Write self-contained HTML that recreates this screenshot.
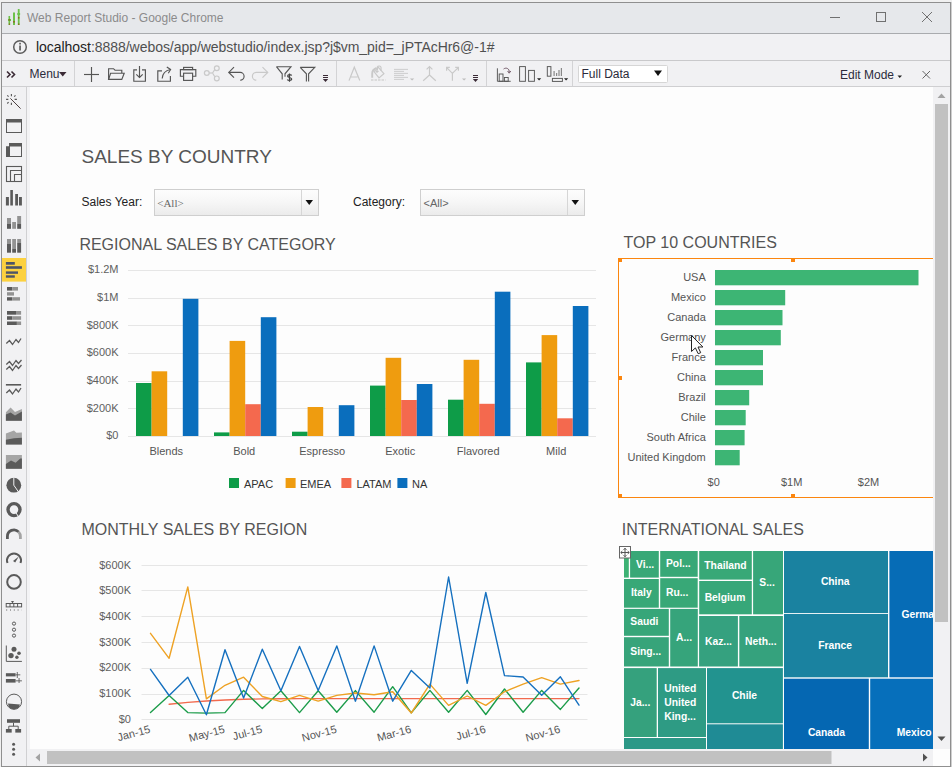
<!DOCTYPE html>
<html><head><meta charset="utf-8">
<style>
*{margin:0;padding:0;box-sizing:border-box}
html,body{width:952px;height:767px;overflow:hidden;background:#f0f0f0;font-family:"Liberation Sans",sans-serif}
.a{position:absolute}
#win{position:absolute;left:0;top:0;width:952px;height:767px;overflow:hidden}
#frame{position:absolute;left:1px;top:2px;width:950px;height:765px;border:1px solid #8f8f8f}
#title{position:absolute;left:2px;top:3px;width:948px;height:31px;background:#e6e8eb;border-bottom:1px solid #a9abae}
#addr{position:absolute;left:2px;top:34px;width:948px;height:27px;background:#f1f1f3;border-bottom:1px solid #c9c9cb}
#tb{position:absolute;left:2px;top:61px;width:948px;height:26px;background:#f1f1f3;border-bottom:1px solid #cfcfd1}
#side{position:absolute;left:2px;top:87px;width:25px;height:680px;background:#f1f1f3;border-right:1px solid #d0d0d2}
#content{position:absolute;left:27px;top:87px;width:906px;height:662px;background:#fdfdfd}
#vsb{position:absolute;left:933px;top:87px;width:17px;height:662px;background:#f1f1f3}
#hsb{position:absolute;left:27px;top:749px;width:906px;height:17px;background:#f1f1f3}
#corner{position:absolute;left:933px;top:749px;width:17px;height:17px;background:#fdfdfd}
svg{position:absolute;left:0;top:0;overflow:visible}
</style></head><body>
<div id="win">
<div id="title"></div>
<div id="addr"></div>
<div id="tb"></div>
<div id="side"></div>
<div id="content"></div>
<!--CONTENT--><svg width="952" height="767" viewBox="0 0 952 767" style="position:absolute;left:0;top:0">
<defs><linearGradient id="dd" x1="0" y1="0" x2="0" y2="1"><stop offset="0" stop-color="#fdfdfd"/><stop offset="0.5" stop-color="#f6f6f6"/><stop offset="1" stop-color="#ebebeb"/></linearGradient><clipPath id="cc"><rect x="27" y="87" width="906" height="662"/></clipPath></defs>
<g clip-path="url(#cc)">
<text x="81.5" y="163" font-size="19" fill="#555">SALES BY COUNTRY</text>
<text x="81.5" y="206" font-size="12" fill="#222">Sales Year:</text>
<rect x="154.5" y="189.5" width="164" height="26" fill="url(#dd)" stroke="#cfcfcf"/>
<line x1="301.5" y1="190" x2="301.5" y2="215" stroke="#d6d6d6"/>
<polygon points="305.5,200 313,200 309.25,205" fill="#111"/>
<text x="157.2" y="207.3" font-family="Liberation Serif" font-size="11" fill="#666">&lt;All&gt;</text>
<text x="353" y="206" font-size="12" fill="#222">Category:</text>
<rect x="420.5" y="189.5" width="164" height="26" fill="url(#dd)" stroke="#cfcfcf"/>
<line x1="567.5" y1="190" x2="567.5" y2="215" stroke="#d6d6d6"/>
<polygon points="571.5,200 579,200 575.25,205" fill="#111"/>
<text x="423.5" y="207.3" font-size="11" fill="#666">&lt;All&gt;</text>
<text x="79.4" y="250" font-size="16" fill="#555">REGIONAL SALES BY CATEGORY</text>
<line x1="128" y1="436.5" x2="596" y2="436.5" stroke="#e6e6e6"/>
<text x="118.5" y="439.3" font-size="11" fill="#606060" text-anchor="end">$0</text>
<line x1="128" y1="408.5" x2="596" y2="408.5" stroke="#e6e6e6"/>
<text x="118.5" y="411.6" font-size="11" fill="#606060" text-anchor="end">$200K</text>
<line x1="128" y1="381.5" x2="596" y2="381.5" stroke="#e6e6e6"/>
<text x="118.5" y="384.0" font-size="11" fill="#606060" text-anchor="end">$400K</text>
<line x1="128" y1="353.5" x2="596" y2="353.5" stroke="#e6e6e6"/>
<text x="118.5" y="356.3" font-size="11" fill="#606060" text-anchor="end">$600K</text>
<line x1="128" y1="325.5" x2="596" y2="325.5" stroke="#e6e6e6"/>
<text x="118.5" y="328.6" font-size="11" fill="#606060" text-anchor="end">$800K</text>
<line x1="128" y1="298.5" x2="596" y2="298.5" stroke="#e6e6e6"/>
<text x="118.5" y="301.0" font-size="11" fill="#606060" text-anchor="end">$1M</text>
<line x1="128" y1="270.5" x2="596" y2="270.5" stroke="#e6e6e6"/>
<text x="118.5" y="273.3" font-size="11" fill="#606060" text-anchor="end">$1.2M</text>
<rect x="136.0" y="383.0" width="15.6" height="53.0" fill="#0e9c48"/>
<rect x="151.6" y="371.3" width="15.6" height="64.7" fill="#ef9c0f"/>
<rect x="182.8" y="298.8" width="15.6" height="137.2" fill="#0a6ebd"/>
<text x="166.2" y="454.7" font-size="11" fill="#555" text-anchor="middle">Blends</text>
<rect x="214.0" y="432.4" width="15.6" height="3.6" fill="#0e9c48"/>
<rect x="229.6" y="340.9" width="15.6" height="95.1" fill="#ef9c0f"/>
<rect x="245.2" y="404.2" width="15.6" height="31.8" fill="#f4694e"/>
<rect x="260.8" y="317.2" width="15.6" height="118.8" fill="#0a6ebd"/>
<text x="244.2" y="454.7" font-size="11" fill="#555" text-anchor="middle">Bold</text>
<rect x="292.0" y="431.7" width="15.6" height="4.3" fill="#0e9c48"/>
<rect x="307.6" y="407.0" width="15.6" height="29.0" fill="#ef9c0f"/>
<rect x="338.8" y="405.2" width="15.6" height="30.8" fill="#0a6ebd"/>
<text x="322.2" y="454.7" font-size="11" fill="#555" text-anchor="middle">Espresso</text>
<rect x="370.0" y="385.6" width="15.6" height="50.4" fill="#0e9c48"/>
<rect x="385.6" y="357.8" width="15.6" height="78.2" fill="#ef9c0f"/>
<rect x="401.2" y="400.0" width="15.6" height="36.0" fill="#f4694e"/>
<rect x="416.8" y="384.0" width="15.6" height="52.0" fill="#0a6ebd"/>
<text x="400.2" y="454.7" font-size="11" fill="#555" text-anchor="middle">Exotic</text>
<rect x="448.0" y="399.7" width="15.6" height="36.3" fill="#0e9c48"/>
<rect x="463.6" y="359.8" width="15.6" height="76.2" fill="#ef9c0f"/>
<rect x="479.2" y="403.8" width="15.6" height="32.2" fill="#f4694e"/>
<rect x="494.8" y="291.7" width="15.6" height="144.3" fill="#0a6ebd"/>
<text x="478.2" y="454.7" font-size="11" fill="#555" text-anchor="middle">Flavored</text>
<rect x="526.0" y="362.4" width="15.6" height="73.6" fill="#0e9c48"/>
<rect x="541.6" y="335.1" width="15.6" height="100.9" fill="#ef9c0f"/>
<rect x="557.2" y="418.3" width="15.6" height="17.7" fill="#f4694e"/>
<rect x="572.8" y="306.0" width="15.6" height="130.0" fill="#0a6ebd"/>
<text x="556.2" y="454.7" font-size="11" fill="#555" text-anchor="middle">Mild</text>
<rect x="229" y="478" width="10" height="10" fill="#0e9c48"/>
<text x="244" y="488" font-size="11" fill="#333">APAC</text>
<rect x="285.6" y="478" width="10" height="10" fill="#ef9c0f"/>
<text x="300" y="488" font-size="11" fill="#333">EMEA</text>
<rect x="341.4" y="478" width="10" height="10" fill="#f4694e"/>
<text x="356.4" y="488" font-size="11" fill="#333">LATAM</text>
<rect x="397.4" y="478" width="10" height="10" fill="#0a6ebd"/>
<text x="412" y="488" font-size="11" fill="#333">NA</text>
<text x="623.6" y="248" font-size="16" fill="#555">TOP 10 COUNTRIES</text>
<rect x="715" y="270" width="203.5" height="15.3" fill="#3db574"/>
<text x="705.8" y="280.9" font-size="11" fill="#555" text-anchor="end">USA</text>
<rect x="715" y="290" width="70.2" height="15.3" fill="#3db574"/>
<text x="705.8" y="300.9" font-size="11" fill="#555" text-anchor="end">Mexico</text>
<rect x="715" y="310" width="67.5" height="15.3" fill="#3db574"/>
<text x="705.8" y="320.9" font-size="11" fill="#555" text-anchor="end">Canada</text>
<rect x="715" y="330" width="65.8" height="15.3" fill="#3db574"/>
<text x="705.8" y="340.9" font-size="11" fill="#555" text-anchor="end">Germany</text>
<rect x="715" y="350" width="48.0" height="15.3" fill="#3db574"/>
<text x="705.8" y="360.9" font-size="11" fill="#555" text-anchor="end">France</text>
<rect x="715" y="370" width="48.0" height="15.3" fill="#3db574"/>
<text x="705.8" y="380.9" font-size="11" fill="#555" text-anchor="end">China</text>
<rect x="715" y="390" width="34.2" height="15.3" fill="#3db574"/>
<text x="705.8" y="400.9" font-size="11" fill="#555" text-anchor="end">Brazil</text>
<rect x="715" y="410" width="30.7" height="15.3" fill="#3db574"/>
<text x="705.8" y="420.9" font-size="11" fill="#555" text-anchor="end">Chile</text>
<rect x="715" y="430" width="29.6" height="15.3" fill="#3db574"/>
<text x="705.8" y="440.9" font-size="11" fill="#555" text-anchor="end">South Africa</text>
<rect x="715" y="450" width="24.7" height="15.3" fill="#3db574"/>
<text x="705.8" y="460.9" font-size="11" fill="#555" text-anchor="end">United Kingdom</text>
<text x="713.7" y="486.2" font-size="11" fill="#555" text-anchor="middle">$0</text>
<text x="791.7" y="486.2" font-size="11" fill="#555" text-anchor="middle">$1M</text>
<text x="868.5" y="486.2" font-size="11" fill="#555" text-anchor="middle">$2M</text>
<rect x="618.5" y="258.5" width="340" height="239" fill="none" stroke="#fb860f"/>
<rect x="618" y="258" width="4" height="4" fill="#fb860f"/>
<rect x="791" y="258" width="4" height="4" fill="#fb860f"/>
<rect x="618" y="376" width="4" height="4" fill="#fb860f"/>
<rect x="618" y="494" width="4" height="4" fill="#fb860f"/>
<rect x="791" y="494" width="4" height="4" fill="#fb860f"/>
<text x="81.5" y="535" font-size="16" fill="#555">MONTHLY SALES BY REGION</text>
<line x1="141.5" y1="719.5" x2="587.5" y2="719.5" stroke="#e6e6e6"/>
<text x="131" y="722.9" font-size="11" fill="#606060" text-anchor="end">$0</text>
<line x1="141.5" y1="694.5" x2="587.5" y2="694.5" stroke="#e6e6e6"/>
<text x="131" y="697.1" font-size="11" fill="#606060" text-anchor="end">$100K</text>
<line x1="141.5" y1="668.5" x2="587.5" y2="668.5" stroke="#e6e6e6"/>
<text x="131" y="671.4" font-size="11" fill="#606060" text-anchor="end">$200K</text>
<line x1="141.5" y1="642.5" x2="587.5" y2="642.5" stroke="#e6e6e6"/>
<text x="131" y="645.7" font-size="11" fill="#606060" text-anchor="end">$300K</text>
<line x1="141.5" y1="616.5" x2="587.5" y2="616.5" stroke="#e6e6e6"/>
<text x="131" y="619.9" font-size="11" fill="#606060" text-anchor="end">$400K</text>
<line x1="141.5" y1="590.5" x2="587.5" y2="590.5" stroke="#e6e6e6"/>
<text x="131" y="594.2" font-size="11" fill="#606060" text-anchor="end">$500K</text>
<line x1="141.5" y1="565.5" x2="587.5" y2="565.5" stroke="#e6e6e6"/>
<text x="131" y="568.5" font-size="11" fill="#606060" text-anchor="end">$600K</text>
<polyline points="169.1,704.3 187.8,702.4 206.4,701.0 225.0,700.0 243.6,699.3 262.3,698.9 280.9,698.7 299.5,698.6 318.2,698.6 336.8,698.6 355.4,698.6 374.1,698.6 392.7,698.6 411.3,698.6 429.9,698.6 448.6,698.6 467.2,698.6 485.8,698.6 504.5,698.6 523.1,698.6 541.7,698.6 560.4,698.6 579.0,698.6" fill="none" stroke="#f26a4e" stroke-width="1.4" stroke-linejoin="round" stroke-linecap="round"/>
<polyline points="150.5,712.6 169.1,695.5 187.8,712.6 206.4,713.1 225.0,712.6 243.6,690.4 262.3,708.6 280.9,690.8 299.5,712.6 318.2,690.7 336.8,712.2 355.4,690.6 374.1,712.2 392.7,686.7 411.3,712.8 429.9,690.4 448.6,712.2 467.2,690.4 485.8,714.5 504.5,689.0 523.1,712.2 541.7,690.4 560.4,709.4 579.0,688.0" fill="none" stroke="#1c9c4a" stroke-width="1.4" stroke-linejoin="round" stroke-linecap="round"/>
<polyline points="150.5,633.3 169.1,658.3 187.8,586.9 206.4,698.9 225.0,685.3 243.6,677.2 262.3,696.5 280.9,701.7 299.5,695.4 318.2,701.1 336.8,695.4 355.4,693.0 374.1,694.7 392.7,691.8 411.3,713.0 429.9,684.1 448.6,705.4 467.2,696.0 485.8,705.4 504.5,691.8 523.1,684.1 541.7,677.6 560.4,684.1 579.0,680.5" fill="none" stroke="#eea224" stroke-width="1.4" stroke-linejoin="round" stroke-linecap="round"/>
<polyline points="150.5,669.4 169.1,695.5 187.8,677.3 206.4,714.8 225.0,649.7 243.6,698.0 262.3,649.2 280.9,690.8 299.5,646.4 318.2,690.5 336.8,645.9 355.4,701.2 374.1,645.9 392.7,701.2 411.3,670.4 429.9,687.9 448.6,577.0 467.2,683.3 485.8,592.5 504.5,675.6 523.1,677.0 541.7,695.2 560.4,676.8 579.0,705.1" fill="none" stroke="#1570bf" stroke-width="1.4" stroke-linejoin="round" stroke-linecap="round"/>
<text x="151.0" y="732.5" font-size="11" fill="#555" text-anchor="end" transform="rotate(-15 151.0 732.5)">Jan-15</text>
<text x="225.5" y="732.5" font-size="11" fill="#555" text-anchor="end" transform="rotate(-15 225.5 732.5)">May-15</text>
<text x="262.8" y="732.5" font-size="11" fill="#555" text-anchor="end" transform="rotate(-15 262.8 732.5)">Jul-15</text>
<text x="337.3" y="732.5" font-size="11" fill="#555" text-anchor="end" transform="rotate(-15 337.3 732.5)">Nov-15</text>
<text x="411.8" y="732.5" font-size="11" fill="#555" text-anchor="end" transform="rotate(-15 411.8 732.5)">Mar-16</text>
<text x="486.3" y="732.5" font-size="11" fill="#555" text-anchor="end" transform="rotate(-15 486.3 732.5)">Jul-16</text>
<text x="560.9" y="732.5" font-size="11" fill="#555" text-anchor="end" transform="rotate(-15 560.9 732.5)">Nov-16</text>
<text x="621.7" y="535" font-size="16" fill="#555">INTERNATIONAL SALES</text>
<rect x="624" y="551" width="4.8" height="26.6" fill="#3db274"/>
<rect x="630.1" y="551" width="28.7" height="26.6" fill="#38a877"/>
<rect x="660.2" y="551" width="37.5" height="25.8" fill="#38a877"/>
<rect x="624" y="579" width="34.8" height="28.7" fill="#38a877"/>
<rect x="660.2" y="578.2" width="37.5" height="29.5" fill="#38a877"/>
<rect x="624" y="608.9" width="44.8" height="26.9" fill="#37a679"/>
<rect x="624" y="637.2" width="44.8" height="29.3" fill="#37a47a"/>
<rect x="670.2" y="608.9" width="27.6" height="57.6" fill="#36a47b"/>
<rect x="624" y="668.1" width="32.7" height="68.9" fill="#35a17d"/>
<rect x="658" y="668.1" width="48.0" height="68.9" fill="#2e9b84"/>
<rect x="624" y="738" width="82.0" height="12.0" fill="#2c9887"/>
<rect x="699.2" y="551" width="52.6" height="28.6" fill="#38a877"/>
<rect x="699.2" y="581" width="52.6" height="33.3" fill="#37a779"/>
<rect x="753.1" y="551" width="29.9" height="63.3" fill="#37a679"/>
<rect x="699.1" y="616" width="38.8" height="50.5" fill="#35a17f"/>
<rect x="739.3" y="616" width="43.6" height="50.5" fill="#35a27d"/>
<rect x="707" y="668.1" width="75.9" height="55.2" fill="#22938f"/>
<rect x="707" y="724.3" width="75.9" height="25.7" fill="#1f8b95"/>
<rect x="784" y="551" width="104.0" height="62.0" fill="#1a82a0"/>
<rect x="784" y="613.9" width="104.0" height="63.4" fill="#1a82a0"/>
<rect x="889.4" y="551" width="50.6" height="126.3" fill="#066cb6"/>
<rect x="784" y="678.7" width="84.8" height="71.3" fill="#0567b2"/>
<rect x="870.2" y="678.7" width="69.8" height="71.3" fill="#066fbb"/>
<text x="636" y="567.7" font-size="10.3" font-weight="bold" fill="#fff" text-anchor="start">Vi...</text>
<text x="666" y="567.2" font-size="10.3" font-weight="bold" fill="#fff" text-anchor="start">Pol...</text>
<text x="631" y="596" font-size="10.3" font-weight="bold" fill="#fff" text-anchor="start">Italy</text>
<text x="666" y="596" font-size="10.3" font-weight="bold" fill="#fff" text-anchor="start">Ru...</text>
<text x="630.3" y="625.4" font-size="10.3" font-weight="bold" fill="#fff" text-anchor="start">Saudi</text>
<text x="630.3" y="654.8" font-size="10.3" font-weight="bold" fill="#fff" text-anchor="start">Sing...</text>
<text x="676" y="641" font-size="10.3" font-weight="bold" fill="#fff" text-anchor="start">A...</text>
<text x="705" y="645" font-size="10.3" font-weight="bold" fill="#fff" text-anchor="start">Kaz...</text>
<text x="745.1" y="645" font-size="10.3" font-weight="bold" fill="#fff" text-anchor="start">Neth...</text>
<text x="630.3" y="705.7" font-size="10.3" font-weight="bold" fill="#fff" text-anchor="start">Ja...</text>
<text x="664.3" y="691.6" font-size="10.3" font-weight="bold" fill="#fff" text-anchor="start">United</text>
<text x="664.3" y="705.7" font-size="10.3" font-weight="bold" fill="#fff" text-anchor="start">United</text>
<text x="664.3" y="719.8" font-size="10.3" font-weight="bold" fill="#fff" text-anchor="start">King...</text>
<text x="744.5" y="699.2" font-size="10.3" font-weight="bold" fill="#fff" text-anchor="middle">Chile</text>
<text x="725.5" y="569" font-size="10.3" font-weight="bold" fill="#fff" text-anchor="middle">Thailand</text>
<text x="725" y="601" font-size="10.3" font-weight="bold" fill="#fff" text-anchor="middle">Belgium</text>
<text x="759.3" y="585.6" font-size="10.3" font-weight="bold" fill="#fff" text-anchor="start">S...</text>
<text x="835.2" y="585" font-size="10.3" font-weight="bold" fill="#fff" text-anchor="middle">China</text>
<text x="835.2" y="648.9" font-size="10.3" font-weight="bold" fill="#fff" text-anchor="middle">France</text>
<text x="901.4" y="618" font-size="10.3" font-weight="bold" fill="#fff" text-anchor="start">Germany</text>
<text x="826.5" y="736.4" font-size="10.3" font-weight="bold" fill="#fff" text-anchor="middle">Canada</text>
<text x="896.75" y="736.4" font-size="10.3" font-weight="bold" fill="#fff" text-anchor="start">Mexico</text>
<rect x="619.5" y="546.5" width="11" height="11.5" fill="#fff" stroke="#666"/>
<path d="M625,548.5 V556.5 M621,552.5 H629" stroke="#555" stroke-width="1" fill="none"/>
<path d="M623.6,549.8 L625,548.2 L626.4,549.8 M623.6,555.2 L625,556.8 L626.4,555.2 M622.3,551.1 L620.7,552.5 L622.3,553.9 M627.7,551.1 L629.3,552.5 L627.7,553.9" stroke="#555" stroke-width="1" fill="none"/>
<path d="M691.5,335.5 L691.5,351.5 L695.4,347.9 L698.2,353.7 L700.7,352.7 L698,347 L702.9,347 Z" fill="#fff" stroke="#222" stroke-width="1"/>
</g>
</svg><!--/CONTENT-->
<div id="vsb"></div>
<div id="hsb"></div>
<div id="corner"></div>
<div id="frame"></div><div style="position:absolute;left:951px;top:2px;width:1px;height:765px;background:#cfcfcf"></div>

<svg width="952" height="767" viewBox="0 0 952 767" style="position:absolute;left:0;top:0">
<!-- title icon -->
<g fill="#6cc24a">
<rect x="8.5" y="16" width="1.6" height="9"/><rect x="8" y="19" width="3" height="2"/>
<rect x="13" y="12.5" width="2" height="12.5"/><rect x="17.8" y="9" width="1.8" height="16"/><rect x="17.3" y="13" width="2.8" height="2"/>
</g>
<g fill="#8a6a1a"><rect x="8.6" y="19.2" width="1.5" height="1.4"/><rect x="13.2" y="21" width="1.6" height="1.6"/><rect x="18" y="17" width="1.4" height="1.6"/><rect x="18" y="23.5" width="1.4" height="1.3"/><rect x="8.8" y="23.5" width="1.3" height="1.3"/></g>
<text x="27" y="22" font-size="12" fill="#8b8b8b">Web Report Studio - Google Chrome</text>
<!-- window controls -->
<g stroke="#707070" stroke-width="1" fill="none">
<line x1="830" y1="17.5" x2="840" y2="17.5"/>
<rect x="876.5" y="12.5" width="9" height="9"/>
<line x1="922" y1="12" x2="932" y2="22"/><line x1="932" y1="12" x2="922" y2="22"/>
</g>
<!-- address -->
<circle cx="20" cy="47" r="6.3" fill="none" stroke="#5c5c5c" stroke-width="1.5"/>
<rect x="19.2" y="45.5" width="1.7" height="5" fill="#5c5c5c"/><rect x="19.2" y="42.8" width="1.7" height="1.7" fill="#5c5c5c"/>
<text x="36" y="52" font-size="14" letter-spacing="-0.04" fill="#505050"><tspan fill="#222">localhost</tspan>:8888/webos/app/webstudio/index.jsp?j$vm_pid=_jPTAcHr6@-1#</text>
</svg>


<svg width="952" height="767" viewBox="0 0 952 767" style="position:absolute;left:0;top:0">
<!-- toolbar -->
<g fill="none" stroke="#3b2b36" stroke-width="1.6" stroke-linejoin="miter">
<polyline points="7,71.5 10,74.5 7,77.5"/><polyline points="11.5,71.5 14.5,74.5 11.5,77.5"/>
</g>
<text x="29.5" y="78" font-size="12" fill="#2b2b3b">Menu</text>
<polygon points="59,72 66.5,72 62.75,76.6" fill="#3b2b36"/>
<g stroke="#d3d3d5" stroke-width="1">
<line x1="74.5" y1="61" x2="74.5" y2="86"/><line x1="336.5" y1="61" x2="336.5" y2="86"/>
<line x1="486.5" y1="61" x2="486.5" y2="86"/><line x1="572.5" y1="61" x2="572.5" y2="86"/>
</g>
<g fill="none" stroke="#555" stroke-width="1.15">
<!-- plus -->
<line x1="84" y1="74.5" x2="99" y2="74.5"/><line x1="91.5" y1="67" x2="91.5" y2="82"/>
<!-- folder -->
<path d="M108.6,79.4 V68.7 H113.5 L115,70.2 H121.8 V73"/>
<path d="M108.6,79.4 L110.6,73.2 H124.2 L121.8,79.4 Z"/>
<!-- download -->
<path d="M137,69.8 H133.8 V81.2 H145.4 V69.8 H142"/>
<line x1="139.5" y1="66" x2="139.5" y2="77.5"/><polyline points="136.3,74.3 139.5,77.5 142.7,74.3"/>
<!-- share -->
<path d="M162,70.8 H157.8 V81.2 H170.4 V76"/>
<path d="M162.2,78.5 C162.5,73.5 165.5,70.5 170.5,69.5"/><polyline points="166.8,67 170.6,69.5 168.3,73.2"/>
<!-- print -->
<rect x="183.6" y="67.4" width="9" height="2.2"/>
<path d="M183.6,76.2 H180.4 V69.6 H195.8 V76.2 H192.6"/>
<rect x="183.6" y="73.2" width="9" height="7.2"/>
<!-- undo -->
<polyline points="234,67.2 228.8,72.4 234,77.6"/>
<path d="M228.8,72.4 H240.2 A3.9,3.9 0 0 1 240.2,80.2"/>
<!-- filter$ -->
<path d="M276.4,66.7 H291 L285,73.8 V76.8 M276.4,66.7 L282.2,73.8 V79.6" stroke-width="1.1"/>
<!-- filter -->
<path d="M300.2,67.4 H314.8 L308.6,73.8 V81.5 M300.2,67.4 L306.4,73.8 V81.5" stroke-width="1.1"/>
</g>
<path d="M289.5,73.6 V81.8 M291.6,75.6 C291.2,74.4 287.8,74.3 287.6,76 C287.4,77.6 291.7,77.3 291.7,79.1 C291.6,80.8 288,80.8 287.3,79.4" fill="none" stroke="#444" stroke-width="1.2"/>
<g fill="none" stroke="#c9c9c9" stroke-width="1.2">
<!-- nodes -->
<circle cx="206.8" cy="73" r="2.4"/><circle cx="216.8" cy="68.3" r="2.4"/><circle cx="216.8" cy="78.4" r="2.4"/>
<line x1="209.2" y1="73" x2="212.5" y2="73"/><path d="M212.5,73 L214.8,69.6 M212.5,73 L214.8,76.8"/>
<!-- redo -->
<polyline points="262.5,67.2 267.7,72.4 262.5,77.6"/>
<path d="M267.7,72.4 H256.3 A3.9,3.9 0 0 0 256.3,80.2"/>
<!-- A -->
<path d="M349,80.6 L354.3,67.2 L359.8,80.6 M351,77 H357.6"/>
<!-- bucket -->
<path d="M374,71.6 L378.4,67.4 L383.9,73.7 L379,77.9 Z"/><path d="M377.4,70 V67 C377.8,65.6 380.8,65.6 381,67.3 V70.8 M375.5,71.3 H378.6 M377,70 V73"/>
<path d="M372.2,77.8 V73.4 C372.2,71 374.4,68.8 376.6,67.9" stroke-width="1.9"/>
<line x1="371" y1="80" x2="385.5" y2="80" stroke-dasharray="2.5,1" stroke-width="1.6" stroke="#d4d4d4"/>
<!-- align -->
<path d="M394,69.4 H408 M394,71.4 H404 M394,73.4 H408 M394,75.4 H404 M394,77.4 H408 M394,79.4 H404" stroke-width="0.9"/>
<!-- merge -->
<path d="M429.5,66.5 V75 L423.2,80.8 M429.5,75 L435.8,80.8 M426.6,69.4 L429.5,66.5 L432.4,69.4"/>
<!-- split -->
<path d="M452.4,80.8 V73.4 L446.8,67.6 M452.4,73.4 L458.2,67.6 M446.6,70.8 V67.4 H449.8 M458.4,70.8 V67.4 H455.2"/>
</g>
<g fill="#bdbdbd"><polygon points="410,78.6 414.2,78.6 412.1,80.6"/><polygon points="462,78.6 466.2,78.6 464.1,80.6"/></g>
<g fill="#3b2b36">
<rect x="323" y="75" width="5" height="1"/><rect x="323" y="77" width="5" height="1"/><polygon points="322.8,79 328.2,79 325.5,82"/>
<rect x="473" y="75" width="5" height="1"/><rect x="473" y="77" width="5" height="1"/><polygon points="472.8,79 478.2,79 475.5,82"/>
</g>
<g fill="none" stroke="#555" stroke-width="0.95">
<path d="M497.4,68.3 V81.3 H510.7"/>
<rect x="499.2" y="74" width="3.8" height="7.3"/><rect x="504.4" y="77.5" width="3.8" height="3.8"/>
<path d="M503.6,69 C506,67.2 509.6,68.4 509.2,72.3" stroke="#6a5060"/><polyline points="507.6,71 509.2,73.2 510.8,71" stroke="#6a5060"/>
<rect x="519.6" y="66.6" width="5.8" height="14.7"/><rect x="528.6" y="70.4" width="5.8" height="10.9"/>
<rect x="547.3" y="66.6" width="3.6" height="9.6"/><rect x="552.4" y="78.4" width="10" height="3"/>
</g>
<g fill="#888"><rect x="553.5" y="71" width="1.2" height="5"/><rect x="556" y="73" width="1.2" height="3"/><rect x="558.4" y="70" width="1.2" height="6"/><rect x="560.8" y="68" width="1.2" height="8"/></g>
<g fill="#222"><polygon points="537,78.2 541.2,78.2 539.1,80.4"/><polygon points="564,78.2 568.2,78.2 566.1,80.4"/></g>
<!-- full data -->
<rect x="578.5" y="65.5" width="89" height="17" rx="1" fill="#fff" stroke="#d6d6d6"/>
<text x="581.5" y="78.3" font-size="12" fill="#2b2b3b">Full Data</text>
<polygon points="654,70.5 662,70.5 658,76" fill="#111"/>
<!-- edit mode -->
<text x="840" y="78.5" font-size="12" fill="#2b2b3b">Edit Mode</text>
<polygon points="897.5,75.5 902,75.5 899.75,78" fill="#222"/>
<g stroke="#666" stroke-width="1"><line x1="922.5" y1="71" x2="930" y2="78.5"/><line x1="930" y1="71" x2="922.5" y2="78.5"/></g>
</svg>

<svg width="952" height="767" viewBox="0 0 952 767" style="position:absolute;left:0;top:0">
<!-- sidebar -->
<rect x="27" y="87" width="3" height="662" fill="#f3f3f5"/>
<g stroke="#5a5a5a" fill="none" stroke-width="1">
<line x1="10.4" y1="98.4" x2="20.6" y2="108.6" stroke="#4d4040" stroke-width="1"/>
<path d="M11.4,94 V96.3 M11.4,102.7 V104.9 M6.1,99.4 H8.3 M14.6,99.4 H16.9 M7.3,95.3 L8.6,96.6 M15.5,95.3 L14.2,96.6 M7.3,103.5 L8.6,102.2" stroke="#555" stroke-width="1.1"/>
</g>
<g fill="#5a5a5a">
<!-- window -->
<path d="M6,119 H22 V133 H6 Z M7,122.5 V132 H21 V122.5 Z" fill-rule="evenodd"/>
<!-- window2 -->
<path d="M9,143 H22 V157 H6 V146.3 H9 Z M10,146.5 V156 H21 V146.5 Z" fill-rule="evenodd"/>
</g>
<g fill="none" stroke="#5a5a5a" stroke-width="1.1">
<rect x="6.5" y="166.5" width="15" height="15"/>
<path d="M10.5,181.5 V170.5 H21.5"/>
<path d="M14.5,181.5 V174.5 H21.5"/>
</g>
<g fill="#5a5a5a">
<rect x="5.9" y="197" width="3" height="8.5"/><rect x="10.3" y="190" width="2.6" height="15.5"/><rect x="15.2" y="194" width="2.8" height="11.5"/><rect x="19" y="197" width="2.9" height="8.5"/>
</g>
<g>
<rect x="7" y="218" width="4" height="6" fill="#929292"/><rect x="7" y="224" width="4" height="4.8" fill="#5a5a5a"/>
<rect x="12.2" y="222" width="3.8" height="6.8" fill="#929292"/>
<rect x="17.2" y="216" width="3.9" height="8" fill="#929292"/><rect x="17.2" y="224" width="3.9" height="4.8" fill="#5a5a5a"/>
<rect x="7" y="239" width="4" height="5" fill="#929292"/><rect x="7" y="244" width="4" height="8.7" fill="#5a5a5a"/>
<rect x="12.2" y="239" width="3.8" height="9.6" fill="#929292"/><rect x="12.2" y="248.6" width="3.8" height="4.1" fill="#5a5a5a"/>
<rect x="17.2" y="239" width="3.9" height="4" fill="#929292"/><rect x="17.2" y="243" width="3.9" height="9.7" fill="#5a5a5a"/>
</g>
<rect x="2" y="258" width="24" height="23.6" fill="#fcd13f"/>
<g fill="#4d5468">
<rect x="5.9" y="262" width="8.9" height="2.7"/><rect x="5.9" y="266.2" width="16" height="2.6"/><rect x="5.9" y="271.4" width="12.1" height="2.4"/><rect x="5.9" y="275.3" width="8.9" height="2.4"/>
</g>
<g>
<rect x="7" y="287" width="5.2" height="3.6" fill="#5a5a5a"/><rect x="12.2" y="287" width="5.8" height="3.6" fill="#929292"/>
<rect x="7" y="292.2" width="7" height="3.4" fill="#929292"/>
<rect x="7" y="297.2" width="5.2" height="3.4" fill="#5a5a5a"/><rect x="12.2" y="297.2" width="7.8" height="3.4" fill="#929292"/>
<rect x="7" y="311" width="9" height="3.7" fill="#5a5a5a"/><rect x="16" y="311" width="5.1" height="3.7" fill="#929292"/>
<rect x="7" y="316.2" width="5.2" height="3.6" fill="#5a5a5a"/><rect x="12.2" y="316.2" width="8.9" height="3.6" fill="#929292"/>
<rect x="7" y="321.5" width="9.9" height="3.5" fill="#5a5a5a"/><rect x="16.9" y="321.5" width="4.2" height="3.5" fill="#929292"/>
</g>
<g fill="none" stroke="#5a5a5a" stroke-width="1.3">
<polyline points="6.3,343.5 9.5,340.5 12.5,344.5 16,339.5 18.5,342.5 21,338.5"/>
<polyline points="6.3,364.5 9.5,361.5 12.5,365.5 16,360.5 18.5,363.5 21.5,360"/>
<polyline points="6.3,369.5 9.5,366.5 12.5,370.5 16,365.5 18.5,368.5 21.5,365"/>
<polyline points="6.3,393 9.5,390 12.5,394 16,389 18.5,392 21,388"/>
</g>
<rect x="5.9" y="384" width="15.2" height="1.6" fill="#5a5a5a"/>
<g>
<polygon points="5.9,412.2 10.6,407.5 15,412 21.9,409 21.9,420.8 5.9,420.8" fill="#a5a5a5"/>
<polygon points="5.9,414.5 10.6,412.5 15,415.5 21.9,411.5 21.9,420.8 5.9,420.8" fill="#5a5a5a"/>
<polygon points="5.9,433.6 14,430.5 16.4,432.8 21.9,432.5 21.9,444.5 5.9,444.5" fill="#a5a5a5"/>
<polygon points="5.9,439.8 14,438.3 21.9,437.8 21.9,444.5 5.9,444.5" fill="#5a5a5a"/>
<rect x="5.9" y="455" width="16" height="13.75" fill="#a5a5a5"/>
<polygon points="5.9,464 11,460.6 15.6,462.8 20.3,458.6 21.9,458.6 21.9,468.75 5.9,468.75" fill="#5a5a5a"/>
</g>
<g fill="#5a5a5a">
<circle cx="13.8" cy="485.2" r="7.4"/><path d="M13.8,485.2 L13.80,477.20 M13.8,485.2 L18.39,491.75" stroke="#f1f1f3" stroke-width="1" fill="none"/><circle cx="14" cy="509.6" r="6" fill="none" stroke="#5a5a5a" stroke-width="3.4"/><line x1="15.85" y1="512.57" x2="18.77" y2="517.23" stroke="#f1f1f3" stroke-width="1"/></g><path d="M7.4,539 V536.5 A6.5,6.5 0 0 1 18.6,531.9" fill="none" stroke="#5a5a5a" stroke-width="2.8"/><path d="M18.6,531.9 A6.5,6.5 0 0 1 20.4,536.5 V539" fill="none" stroke="#a3a3a3" stroke-width="2.8"/><g><rect x="2" y="512.5" width="0" height="0"/>
<g fill="none" stroke="#5a5a5a" stroke-width="2">
<path d="M7.5,563 A7,7 0 1 1 20.5,563"/>
<circle cx="14" cy="581.9" r="6.8"/>
</g>
<path d="M8,557.5 A7,7 0 0 1 14,555.5" stroke="#a0a0a0" stroke-width="0" fill="none"/>
<polygon points="13,561 18.8,556.5 15.2,562.6" fill="#5a5a5a"/>
<g fill="none" stroke="#5a5a5a" stroke-width="1">
<rect x="6.2" y="603.5" width="15.4" height="3.4"/><path d="M10,603.5 V607 M13.8,603.5 V607 M17.6,603.5 V607"/>
<path d="M6.2,610 H21.6" stroke-dasharray="1,2.8"/>
<circle cx="14" cy="623.6" r="1.6"/><circle cx="14" cy="629.7" r="1.6"/><circle cx="14" cy="635.6" r="1.6"/>
<path d="M6.3,645.5 V661.4 H21.9"/>
<circle cx="14" cy="701.7" r="7.6"/>
</g>
<polygon points="11,601 14,601 12.5,603.5" fill="#5a5a5a"/>
<g fill="#5a5a5a">
<circle cx="14" cy="649.3" r="2.5"/><circle cx="19" cy="653.3" r="1.8"/><circle cx="11" cy="655.6" r="2.7"/><circle cx="16.9" cy="657.2" r="1.7"/>
<rect x="5.9" y="673.2" width="9.7" height="3.2"/><rect x="15.6" y="674.4" width="4.7" height="0.9"/><rect x="16.8" y="672" width="0.9" height="6"/>
<rect x="5.9" y="679" width="9.7" height="3.6"/><rect x="15.6" y="680.4" width="6.3" height="0.9"/><rect x="18.6" y="678" width="0.9" height="5"/>
<path d="M8,703.4 L20,704.6 A6.1,6.1 0 0 1 8,703.4 Z"/>
<rect x="7" y="719.2" width="13" height="3.6"/><rect x="5.9" y="729" width="5.8" height="3.6"/><rect x="15.3" y="729" width="5.8" height="3.6"/>
<circle cx="13.6" cy="744.2" r="1.5"/><circle cx="13.6" cy="749.3" r="1.5"/><circle cx="13.6" cy="754.3" r="1.5"/>
</g>
<path d="M13.5,722.8 V726.2 M8.8,729 V726.2 H18.2 V729" fill="none" stroke="#5a5a5a" stroke-width="1"/>
<!-- scrollbars -->
<polygon points="937.5,98 945.5,98 941.5,93.5" fill="#a3a3a3"/>
<rect x="935" y="104" width="13" height="518" fill="#c1c1c1"/>
<polygon points="937.5,736.5 945.5,736.5 941.5,741" fill="#505050"/>
<polygon points="40,753.5 40,761.5 35.5,757.5" fill="#a3a3a3"/>
<rect x="47" y="751" width="784.5" height="13" fill="#c1c1c1"/>
<polygon points="923,753.5 923,761.5 927.5,757.5" fill="#505050"/>
</svg>
</div>
</body></html>
